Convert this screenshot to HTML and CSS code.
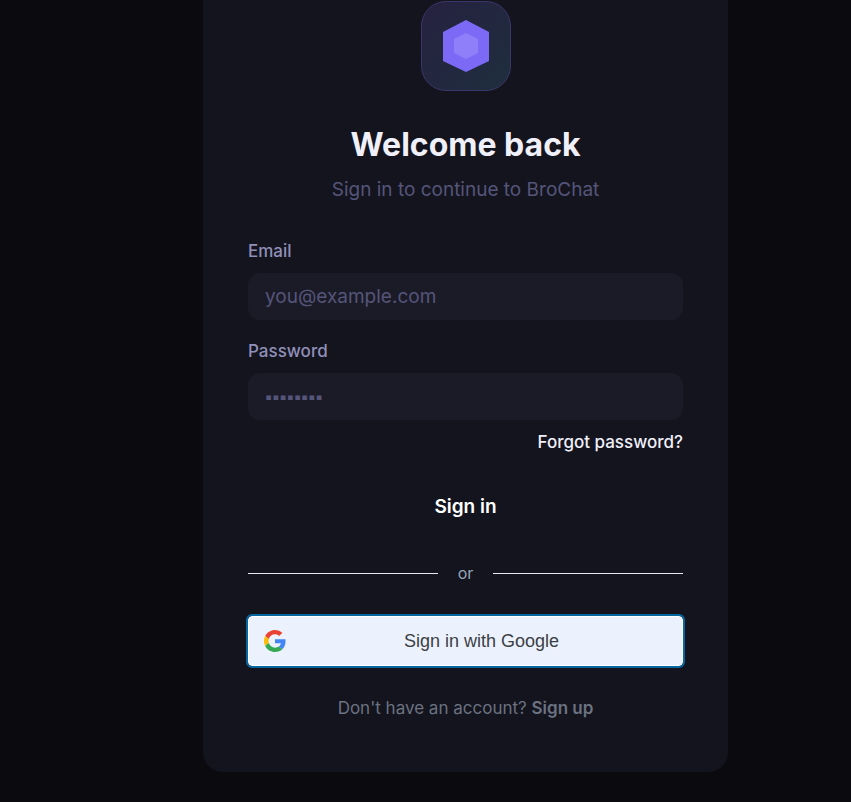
FILE: index.html
```html
<!DOCTYPE html>
<html lang="en">
<head>
  <meta charset="UTF-8">
  <meta name="viewport" content="width=device-width, initial-scale=1.0">
  <title>BroChat - Sign in</title>
  <link rel="stylesheet" href="styles.css">
</head>
<body>
  <main class="login-card">
    <div class="logo">
      <svg width="46" height="52" viewBox="0 0 46 52" aria-hidden="true">
        <path fill="#7c6af7" d="M23 0 46 12v29L23 52 0 41V12z"/>
        <path fill="#8f7ff8" d="M23 13l12 6v14l-12 6-12-6V19z"/>
      </svg>
    </div>
    <h1>Welcome back</h1>
    <p class="subtitle">Sign in to continue to BroChat</p>

    <form class="login-form">
      <label for="email">Email</label>
      <input type="email" id="email" placeholder="you@example.com">

      <label for="password">Password</label>
      <input type="password" id="password" placeholder="▪▪▪▪▪▪▪▪">

      <a class="forgot" href="#">Forgot password?</a>
      <button type="submit" class="btn-signin">Sign in</button>
    </form>

    <div class="divider"><span>or</span></div>

    <button type="button" class="btn-google">
      <svg width="22" height="22" viewBox="0 0 48 48" aria-hidden="true">
        <path fill="#ea4335" d="M24 9.5c3.54 0 6.71 1.22 9.21 3.6l6.85-6.85C35.9 2.38 30.47 0 24 0 14.62 0 6.51 5.38 2.56 13.22l7.98 6.19C12.43 13.72 17.74 9.5 24 9.5z"/>
        <path fill="#4285f4" d="M46.98 24.55c0-1.57-.15-3.09-.38-4.55H24v9.02h12.94c-.58 2.96-2.26 5.48-4.78 7.18l7.73 6c4.51-4.18 7.09-10.36 7.09-17.65z"/>
        <path fill="#fbbc05" d="M10.53 28.59c-.48-1.45-.76-2.99-.76-4.59s.27-3.14.76-4.59l-7.98-6.19C.92 16.46 0 20.12 0 24c0 3.88.92 7.54 2.56 10.78l7.97-6.19z"/>
        <path fill="#34a853" d="M24 48c6.48 0 11.93-2.13 15.89-5.81l-7.73-6c-2.15 1.45-4.92 2.3-8.16 2.3-6.26 0-11.57-4.22-13.47-9.91l-7.98 6.19C6.51 42.62 14.62 48 24 48z"/>
      </svg>
      <span>Sign in with Google</span>
    </button>

    <p class="signup">Don't have an account? <a href="#">Sign up</a></p>
  </main>
</body>
</html>
```
FILE: styles.css
```css
* {
  box-sizing: border-box;
}

body {
  margin: 0;
  padding: 0 0 30px 80px;
  min-height: 100vh;
  background: #0a0a0f;
  color: #f0f0fa;
  font-family: Inter, "Liberation Sans", sans-serif;
  font-size: 17px;
  line-height: 20px;
}

.login-card {
  width: 100%;
  max-width: 525px;
  margin: 0 auto;
  padding: 1px 45px 54px;
  background: #14141e;
  border-radius: 0 0 20px 20px;
}

.logo {
  display: flex;
  align-items: center;
  justify-content: center;
  width: 90px;
  height: 90px;
  margin: 0 auto 34px;
  border: 1px solid #3b3569;
  border-radius: 25px;
  background: linear-gradient(135deg, #262140, #1e2e3e);
}

h1 {
  margin: 0 0 13px;
  font-size: 32px;
  line-height: 40px;
  font-weight: 700;
  text-align: center;
}

.subtitle {
  margin: 0 0 39px;
  font-size: 19px;
  line-height: 24px;
  color: #55557a;
  text-align: center;
}

.login-form {
  display: flex;
  flex-direction: column;
}

label {
  margin-bottom: 12px;
  color: #9090b8;
  font-weight: 500;
}

input {
  width: 100%;
  height: 47px;
  margin-bottom: 21px;
  padding: 0 17px;
  border: none;
  border-radius: 12px;
  background: #1b1b27;
  color: #f0f0fa;
  font-family: inherit;
  font-size: 19px;
}

input::placeholder {
  color: #55557a;
  opacity: 1;
}

#password {
  margin-bottom: 12px;
  font-family: "DejaVu Sans Mono", monospace;
  font-size: 12px;
}

.forgot {
  align-self: flex-end;
  margin-bottom: 30px;
  color: #f0f0fa;
  font-weight: 500;
  text-decoration: none;
}

.btn-signin {
  height: 48px;
  border: none;
  border-radius: 12px;
  background: transparent;
  color: #fff;
  font-family: inherit;
  font-size: 19px;
  font-weight: 600;
  cursor: pointer;
}

.divider {
  display: flex;
  align-items: center;
  gap: 20px;
  margin: 33px 0;
  color: #94a3b8;
  font-size: 16px;
}

.divider::before,
.divider::after {
  content: "";
  flex: 1;
  height: 1px;
  background: #e8eaf2;
}

.btn-google {
  display: flex;
  align-items: center;
  width: 100%;
  height: 50px;
  padding: 0 15px;
  border: 1px solid #fff;
  border-radius: 4px;
  outline: 2px solid #0566a0;
  background: #ebf2fe;
  color: #3c4043;
  font-family: "Liberation Sans", Arial, sans-serif;
  font-size: 18px;
  cursor: pointer;
}

.btn-google span {
  flex: 1;
  padding-left: 10px;
}

.signup {
  margin: 32px 0 0;
  color: #6b7280;
  text-align: center;
}

.signup a {
  color: inherit;
  font-weight: 600;
  text-decoration: none;
}
```
